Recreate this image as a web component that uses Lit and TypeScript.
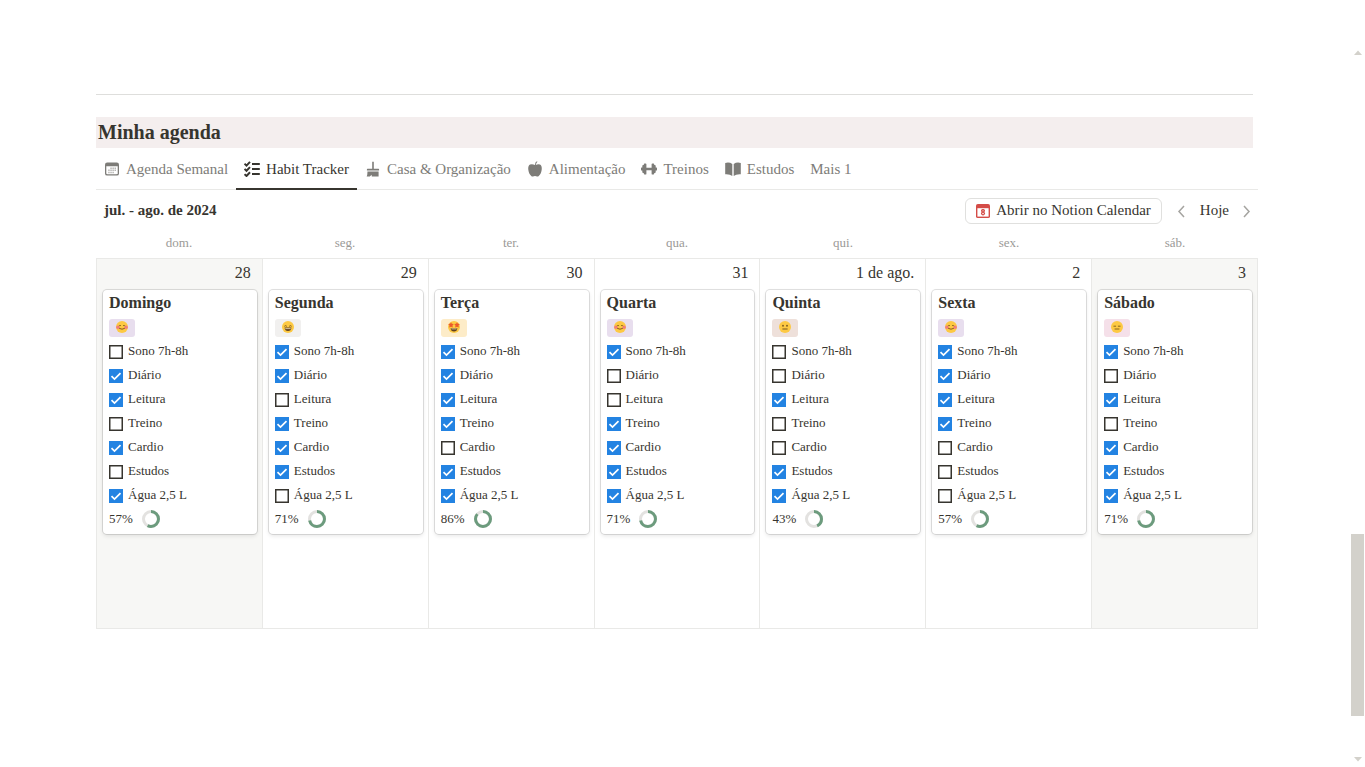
import { LitElement, html, css, svg } from "lit";
import { customElement, property } from "lit/decorators.js";

const HABITS = ["Sono 7h-8h", "Diário", "Leitura", "Treino", "Cardio", "Estudos", "Água 2,5 L"];

type Mood = "blush" | "grin" | "star" | "neutral" | "flat";

interface Day {
  weekday: string;
  date: string;
  title: string;
  mood: Mood;
  tone: string;
  done: number[];
  weekend?: boolean;
}

const DAYS: Day[] = [
  { weekday: "dom.", date: "28", title: "Domingo", mood: "blush", tone: "purple", done: [0, 1, 1, 0, 1, 0, 1], weekend: true },
  { weekday: "seg.", date: "29", title: "Segunda", mood: "grin", tone: "gray", done: [1, 1, 0, 1, 1, 1, 0] },
  { weekday: "ter.", date: "30", title: "Terça", mood: "star", tone: "yellow", done: [1, 1, 1, 1, 0, 1, 1] },
  { weekday: "qua.", date: "31", title: "Quarta", mood: "blush", tone: "purple", done: [1, 0, 0, 1, 1, 1, 1] },
  { weekday: "qui.", date: "1 de ago.", title: "Quinta", mood: "neutral", tone: "brown", done: [0, 0, 1, 0, 0, 1, 1] },
  { weekday: "sex.", date: "2", title: "Sexta", mood: "blush", tone: "purple", done: [1, 1, 1, 1, 0, 0, 0] },
  { weekday: "sáb.", date: "3", title: "Sábado", mood: "flat", tone: "pink", done: [1, 0, 1, 0, 1, 1, 1], weekend: true },
];

const MOODS: Record<Mood, unknown> = {
  blush: svg`
    <ellipse cx="1.9" cy="6.2" rx="1.700" ry="1.700" fill="#f27f7c"/><ellipse cx="10.100" cy="6.200" rx="1.700" ry="1.700" fill="#f27f7c"/>
    <path d="M2.800 5Q3.900 3.900 5 4.700M7 4.700Q8.100 3.900 9.200 5" stroke="#7a5a1c" stroke-width=".8" fill="none"/>
    <path d="M3.200 7.300Q6 9.100 8.800 7.300" stroke="#7a4a1c" stroke-width=".9" fill="none"/>`,
  grin: svg`
    <path d="M2.4 5.3Q3.5 4.1 4.8 5.3M7.2 5.3Q8.5 4.1 9.6 5.3" stroke="#6a4a1c" stroke-width=".9" fill="none"/>
    <path d="M2.6 6.5h6.8Q9.2 10 6 10T2.6 6.5Z" fill="#5f4020"/><path d="M3.3 7.3h5.4v.8H3.3z" fill="#fbe9c0"/>`,
  star: svg`
    <path d="M3 1.2l.9 1.6 1.9.3-1.3 1.4.3 2L3 5.7l-1.8.8.3-2L.2 3.1l1.9-.3zM9 1.2l.9 1.6 1.9.3-1.3 1.4.3 2L9 5.7l-1.8.8.3-2-1.3-1.4 1.9-.3z" fill="#ec5a2c"/>
    <path d="M2.6 7.2h6.8Q9 10.4 6 10.4T2.6 7.2Z" fill="#5f4020"/><path d="M3.4 7.6h5.2v.7H3.4z" fill="#fbe9c0"/>`,
  neutral: svg`
    <ellipse cx="4" cy="4.7" rx=".8" ry="1" fill="#6a4a1c"/><ellipse cx="8" cy="4.7" rx=".8" ry="1" fill="#6a4a1c"/>
    <path d="M3.4 8h5.2" stroke="#6a4a1c" stroke-width=".9"/>`,
  flat: svg`<path d="M2.5 5.2h2.6M6.9 5.2h2.6M3.6 8h4.8" stroke="#7a5a1c" stroke-width=".9"/>`,
};

const ICONS: Record<string, unknown> = {
  calendar: svg`
    <path fill-rule="evenodd" d="M3.2 1.600h9.600A2.200 2.200 0 0 1 15 3.800v8.600a2.200 2.200 0 0 1-2.200 2.200H3.200A2.200 2.200 0 0 1 1 12.400V3.800a2.200 2.200 0 0 1 2.200-2.200ZM2.300 5.200v6.900c0 .8.500 1.200 1.200 1.200h9c.7 0 1.200-.4 1.200-1.200V5.200Z"/>
    <path opacity=".55" d="M6.300 6.500h1.500V8H6.300zM8.400 6.500h1.500V8H8.400zM10.500 6.500H12V8h-1.500zM4.200 8.600h1.500v1.500H4.200zM6.300 8.600h1.500v1.500H6.300zM8.400 8.600h1.500v1.500H8.400zM10.500 8.600H12v1.500h-1.500zM4.200 10.700h1.500v1.500H4.200zM6.300 10.700h1.500v1.500H6.300zM8.400 10.700h1.500v1.500H8.400z"/>`,
  list: svg`
    <path d="M.5 2.700l2 1.900L6 .9M.5 7.900l2 1.900L6 6.100M.5 13.100l2 1.900L6 11.300M8 2.900h7.800M8 8h7.800M8 13.100h7.800" fill="none" stroke="currentColor" stroke-width="2"/>`,
  broom: svg`
    <path d="M7.200 1q.8-1.100 1.600 0V7.800h4.700q.6 0 .6.600v1.200H1.900V8.400q0-.6.600-.6h4.700zM2.400 10.600h11.200v4.800H6.800l-.2-1.600-1.800 1.600H1.700Q2.600 13.400 2.400 10.600Z"/>`,
  apple: svg`
    <path d="M8 3.900Q8 1.200 9.900.3q.6.1.4.8Q9 2.200 8.900 3.900 11 2.700 13 3.600q2.200 1.400 1.700 5.200Q14 13.500 11.500 15.200q-1 .6-2.200.1-1.300-.4-2.600 0-1.200.5-2.200-.1Q2 13.500 1.300 8.800.8 5 3 3.600q2-.9 5 .3Z"/>`,
  dumbbell: svg`
    <path d="M2.800 3.200q0-.8.8-.8h.9q.9 0 .9.900v3.500h5.200V3.300q0-.9.900-.9h.9q.8 0 .8.800v.8h.6q.900 0 .900.900v1.500h.8q.5 0 .5.600v1.900q0 .6-.5.600h-.8V11q0 .9-.9.900h-.6v.9q0 .8-.8.800h-.9q-.9 0-.9-.9V9.200H5.400v3.500q0 .9-.9.900h-.9q-.8 0-.8-.8v-.9h-.6q-.9 0-.9-.9V9.500H.5q-.5 0-.5-.6V7q0-.6.500-.6h.8V4.900q0-.9.900-.9h.6z"/>`,
  book: svg`
    <path d="M.2 2Q4.200.8 7.300 3V15Q5 13 .2 13.300ZM15.800 2Q11.800.8 8.700 3V15Q11 13 15.800 13.300Z"/>`,
};

const TABS = [
  { icon: "calendar", label: "Agenda Semanal" },
  { icon: "list", label: "Habit Tracker" },
  { icon: "broom", label: "Casa & Organização" },
  { icon: "apple", label: "Alimentação" },
  { icon: "dumbbell", label: "Treinos" },
  { icon: "book", label: "Estudos" },
  { icon: "", label: "Mais 1" },
];

@customElement("habit-card")
class HabitCard extends LitElement {
  @property({ attribute: false }) day!: Day;

  static styles = css`
    :host {
      display: block;
      margin: 0 5px 0 6px;
      padding: 1px 6px 2px;
      background: #fff;
      border-radius: 4px;
      box-shadow: 0 0 0 1px rgba(15, 15, 15, 0.12), 0 2px 4px rgba(15, 15, 15, 0.1);
      font-size: 13px;
    }
    .title {
      margin: 0 0 1px;
      font-size: 16px;
      line-height: 24px;
      font-weight: 700;
    }
    .mood {
      display: flex;
      align-items: center;
      height: 24px;
    }
    .tag {
      display: flex;
      align-items: center;
      justify-content: center;
      width: 26px;
      height: 18px;
      border-radius: 3px;
    }
    .tag svg {
      width: 12px;
      height: 12px;
      margin-bottom: 2px;
    }
    .purple { background: #e8deee; }
    .gray { background: #f1f0ef; }
    .yellow { background: #fdecc8; }
    .brown { background: #eee0da; }
    .pink { background: #f5e0e9; }
    .habit {
      display: flex;
      align-items: center;
      gap: 5px;
      height: 24px;
      line-height: 20px;
    }
    .box {
      appearance: none;
      flex: none;
      width: 14px;
      height: 14px;
      margin: 0;
      background: url("data:image/svg+xml,%3Csvg xmlns='http://www.w3.org/2000/svg' viewBox='0 0 14 14'%3E%3Cpath d='M.75.75h12.5v12.5H.75z' fill='%23fff' stroke='%2337352f' stroke-width='1.5'/%3E%3C/svg%3E");
    }
    .box:checked {
      background: #2383e2 url("data:image/svg+xml,%3Csvg xmlns='http://www.w3.org/2000/svg' viewBox='0 0 14 14'%3E%3Cpath d='M2.500 7.200l3 2.900 6-6' fill='none' stroke='%23fff' stroke-width='1.7'/%3E%3C/svg%3E");
    }
    .habit span,
    .progress span {
      padding-bottom: 2px;
    }
    .progress {
      display: flex;
      align-items: center;
      gap: 9px;
      height: 24px;
      line-height: 20px;
    }
    .progress svg {
      width: 18px;
      height: 18px;
      margin-bottom: 2px;
    }
  `;

  render() {
    const { title, mood, tone, done } = this.day;
    const ratio = done.reduce((a, b) => a + b, 0) / done.length;
    const length = 2 * Math.PI * 7.5;
    return html`
      <h3 class="title">${title}</h3>
      <div class="mood">
        <span class="tag ${tone}">
          <svg viewBox="0 0 12 12"><circle cx="6" cy="6" r="6" fill="#fdc943" />${MOODS[mood]}</svg>
        </span>
      </div>
      ${HABITS.map(
        (name, i) => html`<label class="habit"><input class="box" type="checkbox" .checked=${!!done[i]} /><span>${name}</span></label>`
      )}
      <div class="progress">
        <span>${Math.round(ratio * 100)}%</span>
        <svg viewBox="0 0 18 18" fill="none" stroke-width="3">
          <circle cx="9" cy="9" r="7.5" stroke="#e3e2e0" />
          <circle cx="9" cy="9" r="7.5" stroke="#6c9b7d" stroke-dasharray="${length * ratio} ${length}" transform="rotate(-90 9 9)" />
        </svg>
      </div>
    `;
  }
}

@customElement("app-root")
class AppRoot extends LitElement {
  static styles = css`
    :host {
      display: grid;
      grid-template-columns: minmax(0, 1fr) 14px;
      min-height: 100vh;
      background: #fff;
      color: #37352f;
      font: 15px/20px "Liberation Serif", "Times New Roman", serif;
    }
    button {
      font: inherit;
      color: inherit;
      background: none;
      border: 0;
      padding: 0;
      cursor: pointer;
    }
    .page {
      padding: 94px 93px 48px 96px;
    }
    .rule {
      height: 1px;
      margin: 0 5px 22px 0;
      border: 0;
      background: #dededc;
    }
    .heading {
      margin: 0 5px 0 0;
      padding: 0 2px 1px;
      background: #f4eeee;
      font-size: 20px;
      line-height: 30px;
      font-weight: 700;
    }
    .tabs {
      display: flex;
      border-bottom: 1px solid #e9e9e7;
    }
    .tab {
      display: flex;
      align-items: center;
      gap: 6px;
      height: 42px;
      margin-bottom: -1px;
      padding: 2px 8px 0;
      border-bottom: 2px solid transparent;
      color: #7d7c78;
      white-space: nowrap;
    }
    .tab.active {
      color: #37352f;
      border-bottom-color: #37352f;
    }
    .tab svg {
      width: 16px;
      height: 16px;
      fill: currentColor;
    }
    .toolbar {
      display: flex;
      align-items: center;
      height: 42px;
      padding: 0 6px 0 8px;
    }
    .month {
      margin: 0 auto 0 0;
      padding-bottom: 2px;
      font-size: 15px;
      font-weight: 700;
    }
    .open {
      display: flex;
      align-items: center;
      gap: 6px;
      height: 26px;
      padding: 0 10px;
      margin-right: 14px;
      border: 1px solid #e0e0de;
      border-radius: 6px;
    }
    .open span {
      padding-bottom: 2px;
    }
    .open svg {
      width: 14px;
      height: 14px;
    }
    .step {
      display: flex;
    }
    .step svg {
      width: 10px;
      height: 14px;
      fill: none;
      stroke: #a5a4a0;
      stroke-width: 1.5;
    }
    .today {
      margin: 0 13px 0 14px;
      padding-bottom: 2px;
    }
    .week {
      display: grid;
      grid-template-columns: repeat(7, minmax(0, 1fr));
    }
    .weekday {
      padding-bottom: 4px;
      font-size: 13px;
      line-height: 22px;
      text-align: center;
      color: #9b9a97;
    }
    .days {
      border: 1px solid #e9e9e7;
      border-right: 0;
    }
    .day {
      padding-bottom: 94px;
      border-right: 1px solid #e9e9e7;
    }
    .weekend {
      background: #f7f7f5;
    }
    .date {
      padding: 3px 11px 7px 0;
      font-size: 16px;
      line-height: 21px;
      text-align: right;
    }
    .scroll {
      display: flex;
      flex-direction: column;
      align-items: center;
      padding: 50px 0 5px;
      box-sizing: border-box;
    }
    .scroll svg {
      width: 8px;
      height: 5px;
      fill: #d3d1cb;
    }
    .before { flex: 479; }
    .thumb {
      flex: 182;
      align-self: stretch;
      margin-right: 1px;
      background: #d3d1cb;
    }
    .after { flex: 41; }
  `;

  render() {
    return html`
      <main class="page">
        <hr class="rule" />
        <h2 class="heading">Minha agenda</h2>
        <nav class="tabs">
          ${TABS.map(
            (tab, i) => html`<button class="tab ${i === 1 ? "active" : ""}">
              ${tab.icon ? html`<svg viewBox="0 0 16 16">${ICONS[tab.icon]}</svg>` : ""}<span>${tab.label}</span>
            </button>`
          )}
        </nav>
        <div class="toolbar">
          <h3 class="month">jul. - ago. de 2024</h3>
          <button class="open">
            <svg viewBox="0 0 15 15">
              <rect width="15" height="15" rx="2" fill="#d44c47" />
              <path d="M1.500 4.500h12v9h-12z" fill="#fff" />
              <path d="M7.500 5.300a2 1.900 0 0 1 1.500 3.300 2.200 2.100 0 1 1-3 0A2 1.900 0 0 1 7.500 5.300Z" fill="#d44c47" />
              <circle cx="7.500" cy="7.300" r=".6" fill="#fff" /><circle cx="7.500" cy="10.200" r=".8" fill="#fff" />
            </svg>
            <span>Abrir no Notion Calendar</span>
          </button>
          <button class="step" aria-label="Anterior"><svg viewBox="0 0 10 14"><path d="M8 2 3 7.500l5 5.500" /></svg></button>
          <button class="today">Hoje</button>
          <button class="step" aria-label="Próximo"><svg viewBox="0 0 10 14"><path d="M2 2l5 5.500-5 5.500" /></svg></button>
        </div>
        <div class="week">${DAYS.map((d) => html`<div class="weekday">${d.weekday}</div>`)}</div>
        <div class="week days">
          ${DAYS.map(
            (d) => html`<section class="day ${d.weekend ? "weekend" : ""}">
              <div class="date">${d.date}</div>
              <habit-card .day=${d}></habit-card>
            </section>`
          )}
        </div>
      </main>
      <div class="scroll" aria-hidden="true">
        <svg viewBox="0 0 8 5"><path d="M4 .500 8 5H0z" /></svg>
        <div class="before"></div>
        <div class="thumb"></div>
        <div class="after"></div>
        <svg viewBox="0 0 8 5"><path d="M0 0h8L4 4.500z" /></svg>
      </div>
    `;
  }
}
